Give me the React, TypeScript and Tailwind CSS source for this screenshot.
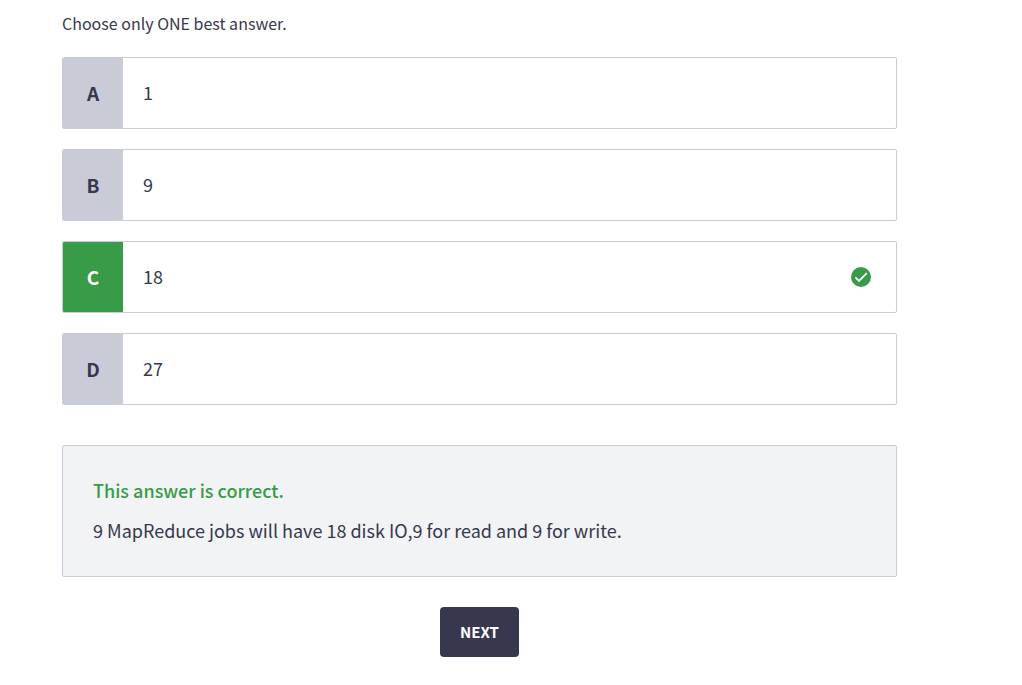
import { useState } from 'react';

const options = [
  { letter: 'A', text: '1' },
  { letter: 'B', text: '9' },
  { letter: 'C', text: '18' },
  { letter: 'D', text: '27' },
];

function CheckIcon() {
  return (
    <svg className="size-5 shrink-0" viewBox="0 0 20 20" fill="none" aria-hidden="true">
      <circle cx="10" cy="10" r="10" fill="#389b48" />
      <path d="M4.4 10.4 8 14 15.8 6.2" stroke="#fff" strokeWidth="1.8" />
    </svg>
  );
}

export default function App() {
  const [selected, setSelected] = useState('C');

  return (
    <main className="max-w-[897px] pt-3 pl-[62px] font-['Source_Sans_Pro','Noto_Sans_CJK_SC',sans-serif] text-[#37384e]">
      <fieldset>
        <legend className="text-base leading-[22px]">Choose only ONE best answer.</legend>
        <div className="mt-[23px] flex flex-col gap-5">
          {options.map(({ letter, text }) => (
            <label
              key={letter}
              className="flex h-[72px] cursor-pointer items-stretch overflow-hidden rounded-xs border border-[#c9cbd6] has-focus-visible:outline-2"
            >
              <input
                type="radio"
                name="answer"
                value={letter}
                checked={selected === letter}
                onChange={() => setSelected(letter)}
                className="sr-only"
              />
              <span
                className={`flex w-[60px] shrink-0 items-center justify-center text-[19px] font-bold ${
                  selected === letter ? 'bg-[#389b48] text-white' : 'bg-[#c9cbd6]'
                }`}
              >
                {letter}
              </span>
              <span className="flex flex-1 items-center justify-between pr-[25px] pl-5 text-lg">
                <span className="pb-0.5">{text}</span>
                {selected === letter && <CheckIcon />}
              </span>
            </label>
          ))}
        </div>
      </fieldset>

      <section className="mt-10 rounded-xs border border-[#c9cbd6] bg-[#f1f3f5] px-[30px] pt-[29px] pb-[31px] text-lg leading-[30px]">
        <h2 className="font-medium text-[#389b48]">This answer is correct.</h2>
        <p className="mt-[10px]">9 MapReduce jobs will have 18 disk IO,9 for read and 9 for write.</p>
      </section>

      <div className="mt-[30px] flex justify-center">
        <button type="button" className="h-[50px] cursor-pointer rounded-sm bg-[#37384e] px-5 text-[15px] font-bold text-white">
          NEXT
        </button>
      </div>
    </main>
  );
}
